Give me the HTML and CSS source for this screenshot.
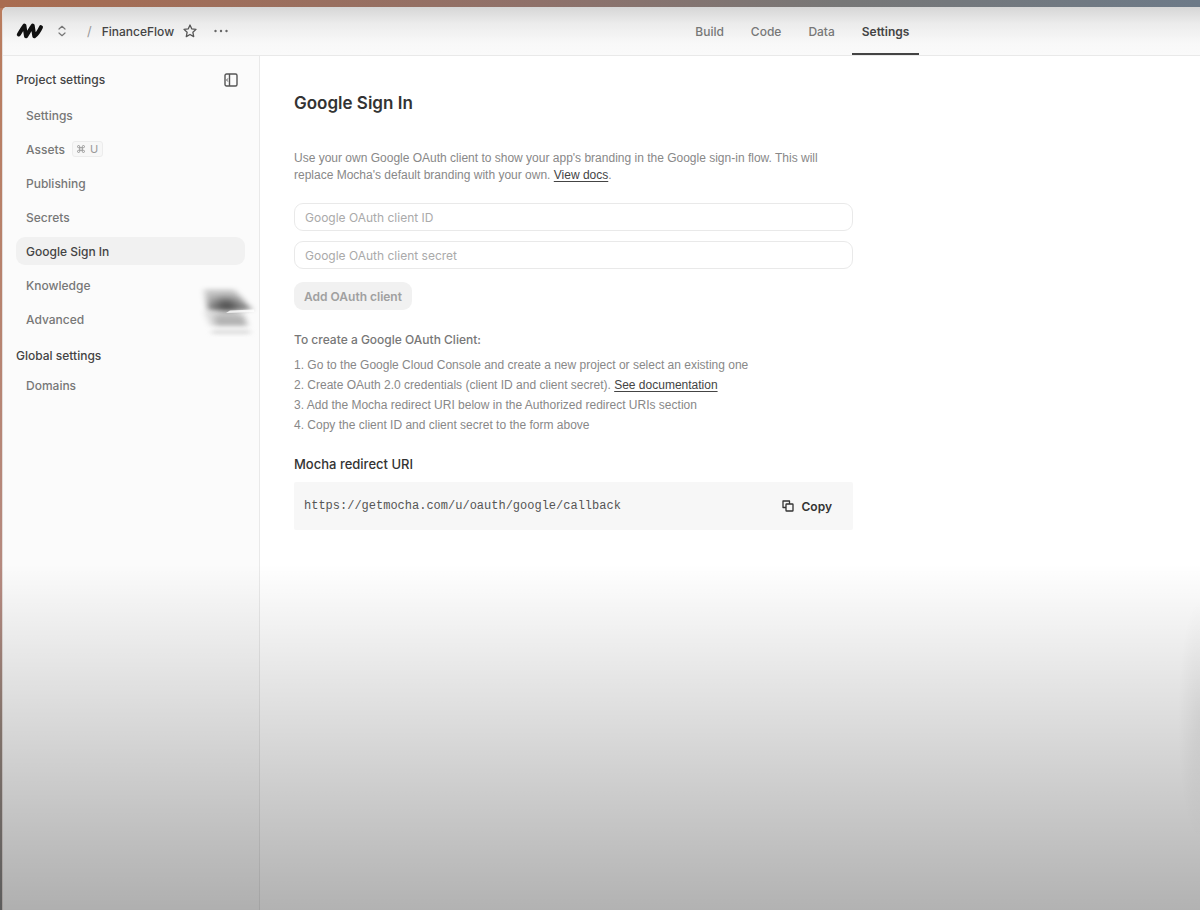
FILE: index.html
```html
<!DOCTYPE html>
<html lang="en">

<head>
    <meta charset="UTF-8">
    <meta name="viewport" content="width=device-width, initial-scale=1.0">
    <title>FinanceFlow - Google Sign In</title>
    <link rel="stylesheet" href="styles.css">
</head>

<body>
    <div class="window">
        <header class="topbar">
            <div class="breadcrumb">
                <a href="#" class="logo" aria-label="Mocha">
                    <svg width="28" height="18" viewBox="0 0 28 18">
                        <path d="M2.800 12.500C4.800 9.500 6.200 6.500 8.400 3.600L10 14.300C12.500 10.500 14.200 7 16.700 3.600L18.300 14.300C21.200 12.500 23 9.500 25 5.200" fill="none" stroke="#111" stroke-width="4" stroke-linecap="round" stroke-linejoin="round"/>
                    </svg>
                </a>
                <button class="icon-btn switcher" aria-label="Switch workspace">
                    <svg width="10" height="12" viewBox="0 0 10 12" fill="none" stroke="#777" stroke-width="1.200" stroke-linecap="round" stroke-linejoin="round">
                        <path d="M2 4L5 1.300L8 4M2 8L5 10.700L8 8"/>
                    </svg>
                </button>
                <span class="slash">/</span>
                <a href="#" class="project-name">FinanceFlow</a>
                <button class="icon-btn star" aria-label="Favorite">
                    <svg width="14" height="14" viewBox="0 0 14 14" fill="none" stroke="#555" stroke-width="1.300" stroke-linejoin="round">
                        <path d="M7 1L8.800 4.900L13 5.400L9.900 8.300L10.700 12.600L7 10.500L3.300 12.600L4.100 8.300L1 5.400L5.200 4.900Z"/>
                    </svg>
                </button>
                <button class="icon-btn" aria-label="More">
                    <svg width="14" height="4" viewBox="0 0 14 4" fill="#666">
                        <circle cx="1.500" cy="2" r="1.200"/>
                        <circle cx="7" cy="2" r="1.200"/>
                        <circle cx="12.500" cy="2" r="1.200"/>
                    </svg>
                </button>
            </div>
            <nav class="tabs">
                <a href="#">Build</a>
                <a href="#">Code</a>
                <a href="#">Data</a>
                <a href="#" class="active">Settings</a>
            </nav>
        </header>

        <div class="layout">
            <aside class="sidebar">
                <div class="sidebar-head">
                    <h2>Project settings</h2>
                    <button class="icon-btn" aria-label="Collapse sidebar">
                        <svg width="14" height="14" viewBox="0 0 14 14" fill="none" stroke="#555" stroke-width="1.400" stroke-linejoin="round">
                            <rect x="1" y="1" width="12" height="12" rx="1.500"/>
                            <path d="M5.500 1V13"/>
                            <path d="M3.800 5.500L2.600 7L3.800 8.500" stroke-width="1"/>
                        </svg>
                    </button>
                </div>
                <nav class="menu">
                    <a href="#">Settings</a>
                    <a href="#">Assets <kbd><svg width="8" height="8" viewBox="0 0 8 8" fill="none" stroke="#999" stroke-width="1"><path d="M2.700 2.700H5.300V5.300H2.700ZM2.700 2.700V1.800A1.100 1.100 0 1 0 1.600 2.700ZM5.300 2.700H6.400A1.100 1.100 0 1 0 5.300 1.600ZM5.300 5.300V6.400A1.100 1.100 0 1 0 6.400 5.300ZM2.700 5.300H1.600A1.100 1.100 0 1 0 2.700 6.400Z"/></svg><span>U</span></kbd></a>
                    <a href="#">Publishing</a>
                    <a href="#">Secrets</a>
                    <a href="#" class="active">Google Sign In</a>
                    <a href="#">Knowledge</a>
                    <a href="#">Advanced</a>
                </nav>
                <h2>Global settings</h2>
                <nav class="menu">
                    <a href="#">Domains</a>
                </nav>
            </aside>

            <main class="content">
                <h1>Google Sign In</h1>
                <p class="intro">Use your own Google OAuth client to show your app's branding in the Google sign-in flow. This will replace Mocha's default branding with your own. <a href="#">View docs</a>.</p>

                <form class="oauth-form">
                    <input type="text" aria-label="Google OAuth client ID" placeholder="Google OAuth client ID">
                    <input type="text" aria-label="Google OAuth client secret" placeholder="Google OAuth client secret">
                    <button type="submit" class="submit-btn" disabled>Add OAuth client</button>
                </form>

                <h3>To create a Google OAuth Client:</h3>
                <ol class="steps">
                    <li>Go to the Google Cloud Console and create a new project or select an existing one</li>
                    <li>Create OAuth 2.0 credentials (client ID and client secret). <a href="#">See documentation</a></li>
                    <li>Add the Mocha redirect URI below in the Authorized redirect URIs section</li>
                    <li>Copy the client ID and client secret to the form above</li>
                </ol>

                <h2>Mocha redirect URI</h2>
                <div class="uri-box">
                    <code>https://getmocha.com/u/oauth/google/callback</code>
                    <button class="copy-btn">
                        <svg width="12" height="12" viewBox="0 0 12 12" fill="none" stroke="#333" stroke-width="1.300" stroke-linejoin="round">
                            <rect x="4" y="4" width="7" height="7" rx="0.600"/>
                            <path d="M4 7.500H1V1H7.500V4"/>
                        </svg>
                        Copy
                    </button>
                </div>
            </main>
        </div>
    </div>

    <!-- moving pointer -->
    <svg class="pointer" width="66" height="64" viewBox="0 0 66 64" aria-hidden="true">
        <defs>
            <linearGradient id="trail" x1="0" y1="0" x2="0" y2="1">
                <stop offset="0" stop-color="#000" stop-opacity="0.150"/>
                <stop offset="0.500" stop-color="#000" stop-opacity="0.300"/>
                <stop offset="1" stop-color="#000" stop-opacity="0.500"/>
            </linearGradient>
            <filter id="soft" filterUnits="userSpaceOnUse" x="0" y="0" width="66" height="64">
                <feGaussianBlur stdDeviation="3 2"/>
            </filter>
            <filter id="core" filterUnits="userSpaceOnUse" x="0" y="0" width="66" height="64">
                <feGaussianBlur stdDeviation="6 4"/>
            </filter>
        </defs>
        <path d="M8 8H38L56 29H12Z" fill="url(#trail)" filter="url(#soft)"/>
        <path d="M20 18H38L42 30H22Z" fill="#000" fill-opacity="0.500" filter="url(#core)"/>
        <path d="M8 30H46L51 45H14Z" fill="#000" fill-opacity="0.120" filter="url(#soft)"/>
        <path d="M18 35H48L52 45H20Z" fill="#000" fill-opacity="0.180" filter="url(#soft)"/>
        <path d="M16 50H54V52H16Z" fill="#bbb" filter="url(#soft)"/>
        <path d="M34 29.500L58 28.500V31L30 32Z" fill="#fff" fill-opacity="0.800"/>
    </svg>
    <div class="shade"></div>
</body>

</html>
```

FILE: styles.css
```css
* {
    box-sizing: border-box;
}

body {
    margin: 0;
    min-height: 100vh;
    padding: 7px 0 0 2px;
    display: flex;
    font-family: Inter, "Liberation Sans", sans-serif;
    font-size: 12px;
    color: #444;
    background: linear-gradient(to right, #a96c50 0, #8f716a 45%, #777 70%, #6d7a88 100%) top / 100% 8px no-repeat,
        linear-gradient(#b97b5c, #b58a80 65%, #96857c 80%, #858585);
}

h1,
h2,
h3,
p,
ol {
    margin: 0;
}

a {
    color: inherit;
    text-decoration: none;
}

button {
    font: inherit;
    border: none;
}

.window {
    flex: 1;
    display: flex;
    flex-direction: column;
    background: #fff;
    border-left: 1px solid #e5dedb;
    border-top-left-radius: 5px;
    overflow: hidden;
}

.topbar {
    height: 49px;
    display: flex;
    border-bottom: 1px solid #e9e9e9;
    background: linear-gradient(#d6d6d6, #ececec 35%, #f8f8f8 75%, #fafafa);
}

.breadcrumb {
    width: 57%;
    padding-left: 13px;
    display: flex;
    align-items: center;
}

.logo {
    display: flex;
}

.icon-btn {
    padding: 0;
    display: flex;
    background: none;
}

.switcher {
    margin: 0 20px 0 13px;
}

.slash {
    color: #999;
    font-size: 13px;
}

.project-name {
    margin: 0 9px 0 10px;
    font-weight: 500;
}

.star {
    margin-right: 17px;
}

.tabs {
    display: flex;
    gap: 7px;
}

.tabs a {
    padding: 2px 10px 0;
    display: flex;
    align-items: center;
    color: #777;
    font-weight: 500;
    border-bottom: 2px solid transparent;
}

.tabs .active {
    color: #444;
    font-weight: 600;
    border-color: #444;
}

.layout {
    flex: 1;
    display: flex;
}

.sidebar {
    width: 257px;
    padding: 16px 14px 0 13px;
    background: #fbfbfb;
    border-right: 1px solid #e9e9e9;
}

.sidebar h2 {
    font-size: 12px;
    line-height: 16px;
    font-weight: 500;
}

.sidebar-head {
    display: flex;
    align-items: center;
    justify-content: space-between;
    padding-right: 7px;
}

.menu {
    display: flex;
    flex-direction: column;
    gap: 6px;
    margin: 13px 0 15px;
}

.menu a {
    height: 28px;
    padding: 0 10px;
    display: flex;
    align-items: center;
    gap: 7px;
    border-radius: 9px;
    color: #777;
    font-weight: 500;
}

.menu .active {
    background: #f1f1f1;
    color: #444;
}

.sidebar h2 + .menu {
    margin-top: 7px;
}

kbd {
    padding: 0 4px;
    height: 16px;
    display: flex;
    align-items: center;
    gap: 5px;
    border: 1px solid #ececec;
    border-radius: 3px;
    background: #f7f7f7;
    color: #999;
    font: 11px Inter, sans-serif;
}

.content {
    flex: 1;
    max-width: 627px;
    padding: 36px 34px 0;
    color: #888;
}

h1 {
    font-size: 17px;
    line-height: 22px;
    font-weight: 600;
    color: #333;
}

.intro {
    margin: 36px 0 19px;
    font-family: "Liberation Sans", Arial, sans-serif;
    line-height: 17px;
}

.content p a,
.content li a {
    color: #444;
    text-decoration: underline;
    text-underline-offset: 2px;
}

.oauth-form {
    display: flex;
    flex-direction: column;
    align-items: flex-start;
    gap: 10px;
}

.oauth-form input {
    width: 100%;
    height: 28px;
    padding: 0 10px;
    border: 1px solid #e9e9e9;
    border-radius: 9px;
    background: #fff;
    font: inherit;
}

.oauth-form input::placeholder {
    color: #aaa;
}

.submit-btn {
    height: 28px;
    margin-top: 3px;
    padding: 0 10px;
    border-radius: 9px;
    background: #f1f1f1;
    color: #a0a0a0;
    font-weight: 600;
}

h3 {
    margin-top: 21px;
    font-size: 12px;
    line-height: 17px;
    font-weight: 500;
    color: #777;
}

.steps {
    padding: 0;
    margin: 7px 0 20px;
    font-family: "Liberation Sans", Arial, sans-serif;
    list-style: none;
    counter-reset: step;
    line-height: 20px;
}

.steps li {
    counter-increment: step;
}

.steps li::before {
    content: counter(step) ". ";
}

.content h2 {
    font-size: 13px;
    line-height: 18px;
    font-weight: 500;
    color: #333;
}

.uri-box {
    margin-top: 9px;
    padding: 10px;
    display: flex;
    align-items: center;
    justify-content: space-between;
    background: #f7f7f7;
    border-radius: 2px;
}

.uri-box code {
    font-family: "Liberation Mono", monospace;
    font-size: 12px;
    color: #555;
}

.copy-btn {
    height: 28px;
    padding: 0 11px;
    display: flex;
    align-items: center;
    gap: 8px;
    background: none;
    color: #333;
    font-weight: 600;
}

.pointer {
    position: absolute;
    left: 196px;
    top: 281px;
}

/* darkens the lower part of the page */
.shade {
    position: absolute;
    inset: 62% 0 0;
    pointer-events: none;
    background: radial-gradient(ellipse 22px 120px at 100% 45%, rgba(0, 0, 0, 0.06), transparent),
        linear-gradient(transparent, rgba(0, 0, 0, 0.3));
}
```
